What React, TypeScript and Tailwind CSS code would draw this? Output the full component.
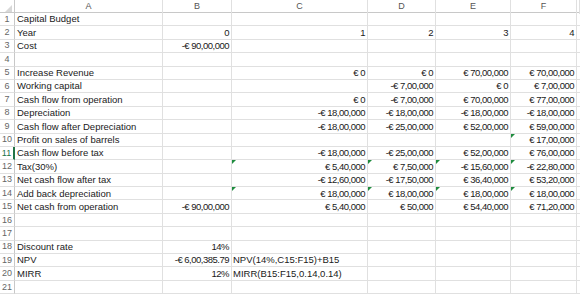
import React from 'react';

type Row = { label?: string; cells?: (string | undefined)[]; left?: number[] };

// columns: B..F
const rows: Row[] = [
  { label: 'Capital Budget' },
  { label: 'Year', cells: ['0', '1', '2', '3', '4'] },
  { label: 'Cost', cells: ['-€ 90,00,000'] },
  {},
  { label: 'Increase Revenue', cells: [undefined, '€ 0', '€ 0', '€ 70,00,000', '€ 70,00,000'] },
  { label: 'Working capital', cells: [undefined, undefined, '-€ 7,00,000', '€ 0', '€ 7,00,000'] },
  { label: 'Cash flow from operation', cells: [undefined, '€ 0', '-€ 7,00,000', '€ 70,00,000', '€ 77,00,000'] },
  { label: 'Depreciation', cells: [undefined, '-€ 18,00,000', '-€ 18,00,000', '-€ 18,00,000', '-€ 18,00,000'] },
  { label: 'Cash flow after Depreciation', cells: [undefined, '-€ 18,00,000', '-€ 25,00,000', '€ 52,00,000', '€ 59,00,000'] },
  { label: 'Profit on sales of barrels', cells: [undefined, undefined, undefined, undefined, '€ 17,00,000'] },
  { label: 'Cash flow before tax', cells: [undefined, '-€ 18,00,000', '-€ 25,00,000', '€ 52,00,000', '€ 76,00,000'] },
  { label: 'Tax(30%)', cells: [undefined, '€ 5,40,000', '€ 7,50,000', '-€ 15,60,000', '-€ 22,80,000'] },
  { label: 'Net cash flow after tax', cells: [undefined, '-€ 12,60,000', '-€ 17,50,000', '€ 36,40,000', '€ 53,20,000'] },
  { label: 'Add back depreciation', cells: [undefined, '€ 18,00,000', '€ 18,00,000', '€ 18,00,000', '€ 18,00,000'] },
  { label: 'Net cash from operation', cells: ['-€ 90,00,000', '€ 5,40,000', '€ 50,000', '€ 54,40,000', '€ 71,20,000'] },
  {},
  {},
  { label: 'Discount rate', cells: ['14%'] },
  { label: 'NPV', cells: ['-€ 6,00,385.79', 'NPV(14%,C15:F15)+B15'], left: [1] },
  { label: 'MIRR', cells: ['12%', 'MIRR(B15:F15,0.14,0.14)'], left: [1] },
  {},
];

// row number -> column indexes (0=B) with the green error marker
const flags: Record<number, number[]> = {
  10: [4],
  12: [1, 2, 3, 4],
  14: [1, 2, 3, 4],
};

const cols = 'grid grid-cols-[15px_148px_69px_136px_68px_75px_66px_1fr]';

function Flag() {
  return (
    <span className="absolute left-0 top-0 h-0 w-0 border-r-[4px] border-t-[4px] border-r-transparent border-t-[#1e8c3e]" />
  );
}

export default function App() {
  return (
    <div
      className="h-[301px] w-[580px] overflow-hidden bg-white text-[#1a1a1a]"
      style={{ fontFamily: '"Liberation Sans", Arial, sans-serif' }}
    >
      <div className={`${cols} h-[13px] border-b border-[#c8c8c8] bg-white text-[9px] text-[#555]`}>
        <div className="relative border-r border-[#c8c8c8]">
          <span className="absolute bottom-[2px] right-[2px] h-0 w-0 border-b-[7px] border-l-[7px] border-b-[#d8d8d8] border-l-transparent" />
        </div>
        {['A', 'B', 'C', 'D', 'E', 'F', ''].map((c, i) => (
          <div key={i} className="flex items-center justify-center border-r border-[#e0e0e0]">
            {c}
          </div>
        ))}
      </div>
      {rows.map((r, i) => {
        const n = i + 1;
        const active = n === 11;
        return (
          <div key={n} className={`${cols} h-[13.4px] leading-none`}>
            <div
              className={`flex items-center justify-center border-b border-[#e0e0e0] text-[9px] ${
                active ? 'border-r-2 border-r-[#217346] text-[#217346]' : 'border-r border-r-[#c8c8c8] text-[#666]'
              }`}
            >
              {n}
            </div>
            <div className="flex items-center whitespace-nowrap border-b border-r border-[#e0e0e0] pl-[2px] text-[9.5px]">
              {r.label}
            </div>
            {[0, 1, 2, 3, 4].map((c) => {
              const v = r.cells?.[c];
              const left = r.left?.includes(c);
              return (
                <div
                  key={c}
                  className={`relative flex items-center whitespace-nowrap border-b border-r border-[#e0e0e0] ${
                    left ? 'justify-start pl-[1px] text-[9.5px]' : 'justify-end pr-[2px] text-[9.5px] tracking-[-0.5px]'
                  }`}
                >
                  {flags[n]?.includes(c) && <Flag />}
                  {v}
                </div>
              );
            })}
            <div className="border-b border-[#e0e0e0]" />
          </div>
        );
      })}
    </div>
  );
}
